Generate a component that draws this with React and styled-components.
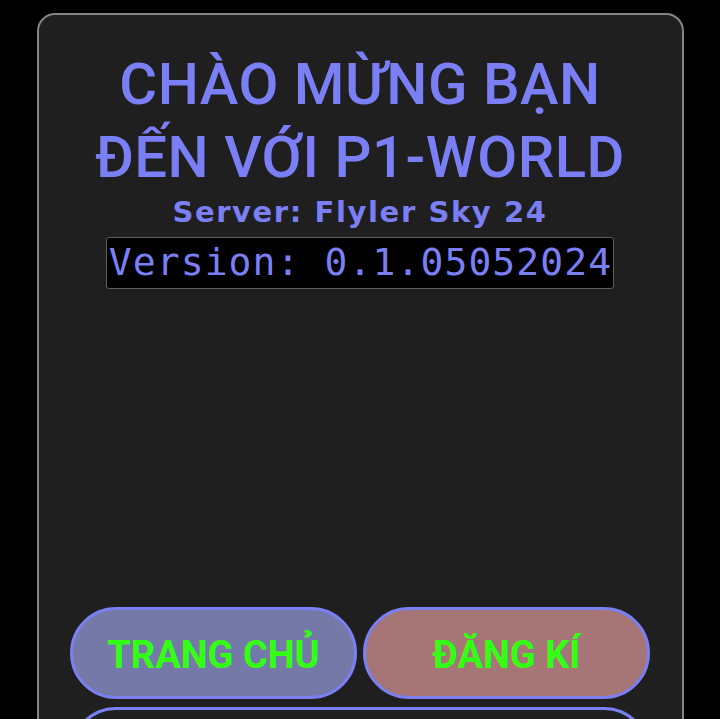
import React from "react";
import styled, { createGlobalStyle } from "styled-components";

const Global = createGlobalStyle`
  html, body { margin: 0; padding: 0; background: #000; }
  body { font-family: Roboto, "Noto Sans", sans-serif; overflow: hidden; }
`;

const Page = styled.div`
  min-height: 719px;
  background: #000;
  padding-top: 13px;
  display: flex;
  justify-content: center;
`;

const Card = styled.main`
  width: 647px;
  box-sizing: border-box;
  min-height: 900px;
  background: #1f1f1f;
  border: 2px solid #858585;
  border-radius: 18px;
  padding: 33px 32px 0;
  display: flex;
  flex-direction: column;
  align-items: center;
`;

const Title = styled.h1`
  margin: 0;
  font-family: Roboto, sans-serif;
  font-weight: 500;
  font-size: 58px;
  line-height: 73px;
  color: #7b7ff6;
  text-align: center;
  letter-spacing: 0.5px;
`;

const Server = styled.h2`
  margin: 0;
  font-family: "DejaVu Sans", sans-serif;
  font-weight: 700;
  font-size: 29px;
  line-height: 36px;
  color: #7b7ff6;
  text-align: center;
  letter-spacing: 1.6px;
`;

const Version = styled.div`
  margin-top: 7px;
  background: #000;
  border: 1px solid #5e5e5e;
  border-radius: 3px;
  padding: 0 1px 2px 2px;
  font-family: "DejaVu Sans Mono", monospace;
  font-size: 38px;
  line-height: 48px;
  letter-spacing: 1.1px;
  color: #7b7ff6;
  white-space: nowrap;
`;

const Spacer = styled.div`
  height: 318px;
`;

const ButtonRow = styled.div`
  display: grid;
  grid-template-columns: 1fr 1fr;
  gap: 6px;
  width: 580px;
`;

const Pill = styled.button`
  box-sizing: border-box;
  height: 92px;
  border: 3px solid #7a80f2;
  border-radius: 46px;
  background: ${(p) => p.$bg};
  color: #33ff14;
  font-family: Roboto, sans-serif;
  font-weight: 700;
  font-size: 38px;
  padding: 4px 0 0;
  cursor: pointer;
`;

const WidePill = styled.div`
  box-sizing: border-box;
  margin-top: 8px;
  width: 580px;
  height: 92px;
  border: 3px solid #7a80f2;
  border-radius: 46px;
  background: #1f1f1f;
`;

export default function App() {
  return (
    <>
      <Global />
      <Page>
        <Card>
          <Title>
            CHÀO MỪNG BẠN
            <br />
            ĐẾN VỚI P1-WORLD
          </Title>
          <Server>Server: Flyler Sky 24</Server>
          <Version>Version: 0.1.05052024</Version>
          <Spacer />
          <ButtonRow>
            <Pill $bg="#7579a8">TRANG CHỦ</Pill>
            <Pill $bg="#a67575">ĐĂNG KÍ</Pill>
          </ButtonRow>
          <WidePill />
        </Card>
      </Page>
    </>
  );
}
